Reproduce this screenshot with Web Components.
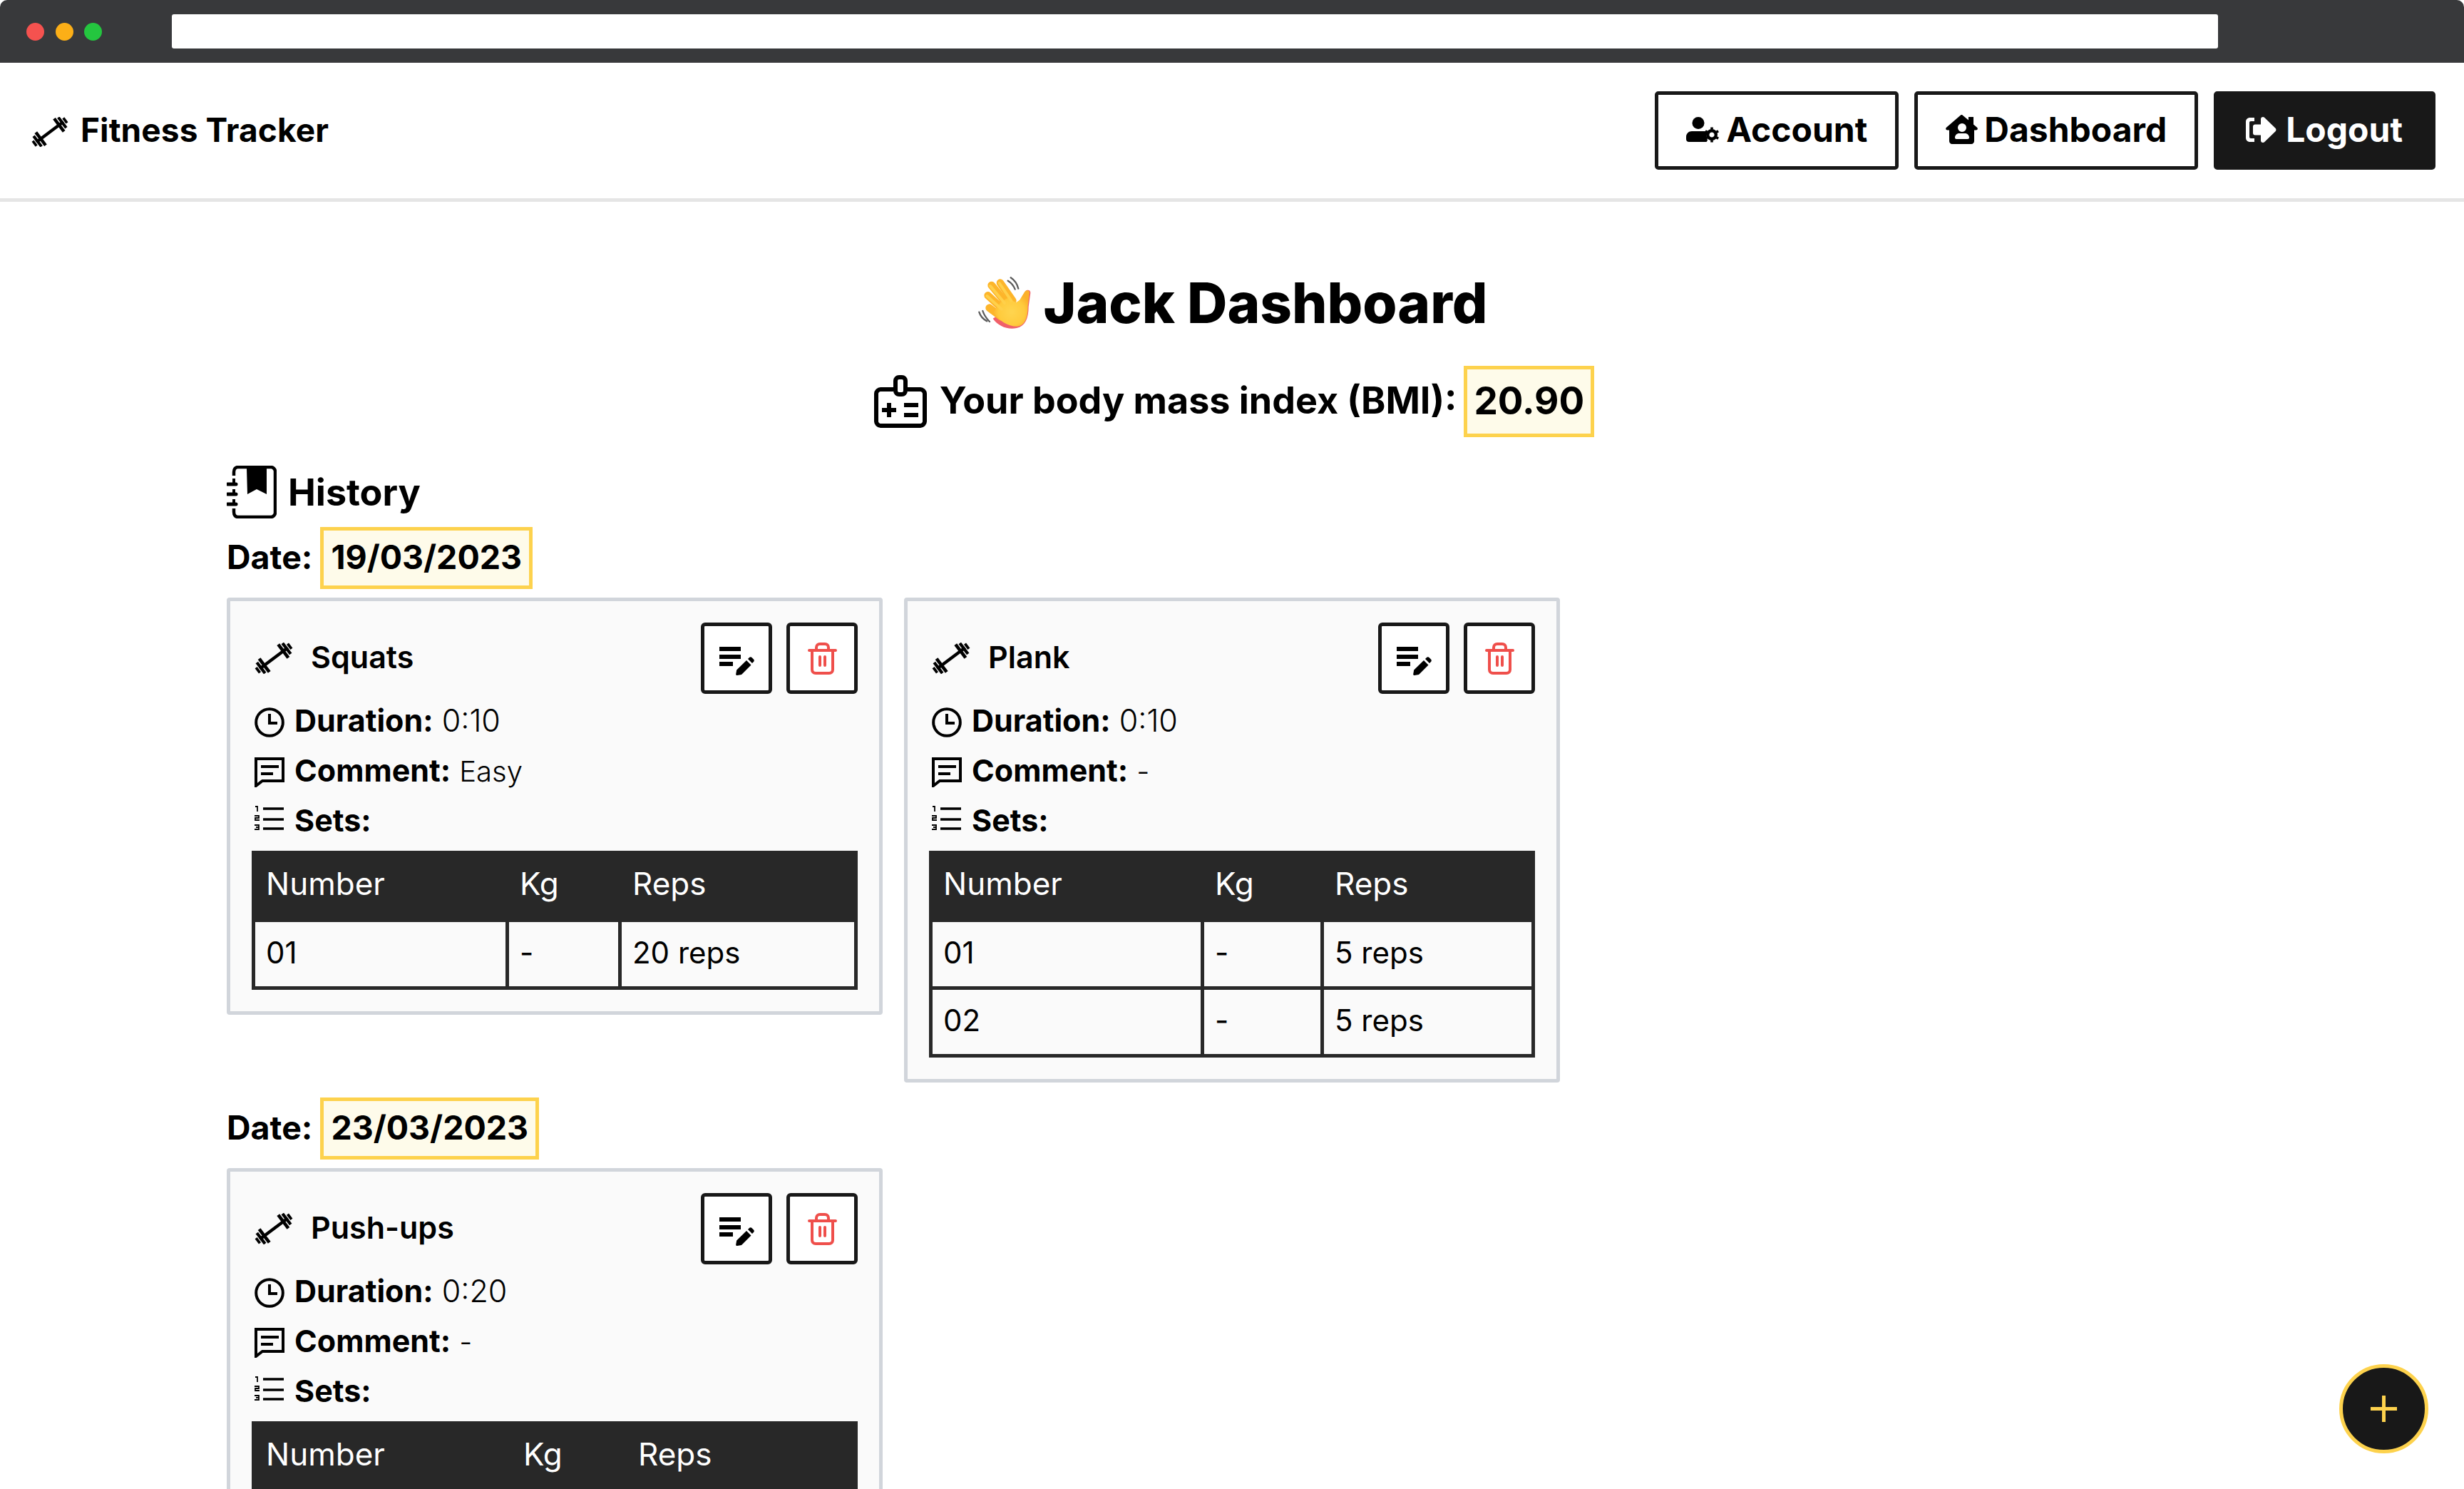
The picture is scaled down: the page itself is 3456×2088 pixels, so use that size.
<!DOCTYPE html>
<html lang="en">
<head>
<meta charset="utf-8">
<title>Fitness Tracker</title>
<style>
  html, body { margin: 0; height: 2088px; overflow: hidden; background: #fff; }
  body { font-family: Inter, "Liberation Sans", sans-serif; color: #000; }
</style>
</head>
<body>
<browser-bar></browser-bar>
<app-nav>
  <nav-button icon="account">Account</nav-button>
  <nav-button icon="house">Dashboard</nav-button>
  <nav-button icon="logout" dark>Logout</nav-button>
</app-nav>
<dash-page>
  <dash-heading name="Jack Dashboard" bmi="20.90"></dash-heading>
  <history-title>History</history-title>

  <date-group date="19/03/2023">
    <workout-card name="Squats" duration="0:10" comment="Easy"
      cols="351 153 326" rows="01|-|20 reps"></workout-card>
    <workout-card name="Plank" duration="0:10" comment="-"
      cols="376 163 291" rows="01|-|5 reps;02|-|5 reps"></workout-card>
  </date-group>

  <date-group date="23/03/2023">
    <workout-card name="Push-ups" duration="0:20" comment="-"
      cols="356 156 318"></workout-card>
  </date-group>
</dash-page>
<add-button></add-button>

<script>
// all the icons live here, each one is a full svg string
const ICONS = {
  barbell: `<svg viewBox="3 3 50 38" width="100%" height="100%"><g transform="translate(28 22) rotate(-37)" fill="#000">
    <rect x="-22" y="-2" width="44" height="4"/>
    <rect x="-17" y="-10.5" width="4.200" height="21"/><rect x="-22" y="-8.5" width="3.800" height="17"/><rect x="-26.5" y="-4" width="3.400" height="8"/>
    <rect x="12.800" y="-10.5" width="4.200" height="21"/><rect x="18.200" y="-8.5" width="3.800" height="17"/><rect x="23.100" y="-4" width="3.400" height="8"/>
  </g></svg>`,
  account: `<svg viewBox="0 0 47 36" width="47" height="36"><circle cx="17" cy="8.5" r="8.5"/>
    <path d="M8 20h18c1.500 0 3 .5 4 1.200-2 3.300-2 7.800 0 11-.6 2-1 2.800-3 2.800H4c-2.500 0-4-1.500-4-4v-3c0-4.500 3.500-8 8-8z"/>
    <g transform="translate(36 25)"><circle r="5.800" fill="none" stroke="#000" stroke-width="4.400"/>
    <g stroke="#000" stroke-width="3.600"><path d="M0-10.500v3M0 7.500v3M-9.100-5.200l2.600 1.500M6.500 3.700l2.600 1.500M-9.100 5.200l2.600-1.500M6.500-3.700l2.600-1.500"/></g></g></svg>`,
  house: `<svg viewBox="8 8 45 41" width="45" height="41"><path fill-rule="evenodd" d="M31 8 40 15.500V11h7v10.500l5 4.300c1.700 1.600.5 3.700-1.500 3.700H48V45c0 2.200-1.800 4-4 4H17c-2.200 0-4-1.800-4-4V29.500h-2.500c-2 0-3.200-2.100-1.500-3.700L29 8.500c.6-.6 1.400-.6 2 -.5zM31 20a6 6 0 1 0 0 12 6 6 0 0 0 0-12zM27 34c-3.500 0-6 2.700-6 6 0 1.200.8 2 2 2h16c1.200 0 2-.8 2-2 0-3.300-2.500-6-6-6z"/></svg>`,
  logout: `<svg viewBox="0 0 44 36" width="44" height="36" fill="#fff"><path d="M13 1H7C3.200 1 1 3.400 1 7v22c0 3.600 2.200 6 6 6h6v-5H8c-1.300 0-2-.8-2-2V8c0-1.300.7-2 2-2h5z"/>
    <path d="M25 0c.8 0 1.500.3 2 .8l15.500 15c1.300 1.300 1.300 3.200 0 4.500L27 35.200c-.5.500-1.200.8-2 .8-1.700 0-3-1.300-3-3v-7.500H14c-1.700 0-3-1.300-3-3v-9c0-1.700 1.300-3 3-3h8V3c0-1.700 1.300-3 3-3z"/></svg>`,
  wave: `<svg viewBox="0 0 270 270" width="90" height="90"><defs><radialGradient id="p" cx=".5" cy=".6" r=".55"><stop offset="0" stop-color="#ffd54f"/><stop offset=".65" stop-color="#ffcb3d"/><stop offset="1" stop-color="#fbb02a"/></radialGradient></defs>
    <g fill="none" stroke="#5c5c5c" stroke-width="7" stroke-linecap="round"><path d="M152 38c14 8 24 20 30 36"/><path d="M164 25c15 10 27 26 32 46"/><path d="M31 170c5 16 17 30 33 38"/><path d="M46 165c5 15 16 32 29 45"/></g>
    <path d="M90 195c22 32 62 48 100 40 36-8 50-40 50-90l8-58c1-12-14-16-22-6l-22 36-16 12z" fill="#f0606a" transform="translate(-1 2)"/>
    <g fill="none" stroke="#fdb52a" stroke-width="32" stroke-linecap="round"><path d="M120 47l52 75"/><path d="M83 57l62 75"/><path d="M68 100l66 60"/><path d="M74 152l50 38"/></g>
    <path d="M92 170c20 36 60 60 98 60 34-2 46-36 46-86l7-56c1-10-13-13-20-4l-22 36-15 10-36-20-30 20z" fill="url(#p)"/>
    <g fill="none" stroke="#ffd04a" stroke-width="12" stroke-linecap="round"><path d="M116 48l50 74"/><path d="M78 60l60 72"/><path d="M64 102l62 56"/></g></svg>`,
  idcard: `<svg viewBox="0 0 74 74" width="74" height="74"><path d="M27 20H9c-3 0-6 3-6 6v39c0 3 3 6 6 6h56c3 0 6-3 6-6V26c0-3-3-6-6-6H47" fill="none" stroke="#000" stroke-width="6"/>
    <rect x="30" y="3" width="14" height="24" rx="5" fill="none" stroke="#000" stroke-width="6"/>
    <path d="M21 39v20M11 49h20" stroke="#000" stroke-width="6" fill="none"/><path d="M42 42h20M42 56h20" stroke="#000" stroke-width="6"/></svg>`,
  book: `<svg viewBox="0 0 70 74" width="70" height="74"><path d="M10 14V9c0-4 2-7 6-7h46c3 0 6 3 6 6v58c0 3-3 6-6 6H16c-4 0-6-3-6-7v-5" fill="none" stroke="#000" stroke-width="4.500"/>
    <path d="M10 18v6M10 33v6M10 47v6" stroke="#000" stroke-width="4" fill="none"/>
    <path d="M1 26h12M1 40h12M1 54h12" stroke="#000" stroke-width="5" stroke-linecap="round"/>
    <path d="M28 4h28v36l-14-7-13 7z"/></svg>`,
  clock: `<svg viewBox="0 0 42 42" width="42" height="42" fill="none" stroke="#000" stroke-width="4"><circle cx="21" cy="21" r="18.800"/><path d="M21 9v13h11"/></svg>`,
  comment: `<svg viewBox="0 0 42 42" width="42" height="42" fill="none" stroke="#000" stroke-width="4"><path d="M2 2h38v31H11l-9 7z"/><path d="M9 13h25M9 23h17"/></svg>`,
  sets: `<svg viewBox="0 0 42 38" width="42" height="38" style="margin-top:-8px" fill="none" stroke="#000"><path d="M12 4h29M12 19h29M12 32h29" stroke-width="3.400"/>
    <path d="M1 1h3v7M0 14h6v3H1v3h6M0 27h6v3H2h4v3H0" stroke-width="1.800"/></svg>`,
  edit: `<svg viewBox="0 0 50 50" width="50" height="50"><path d="M1 9h30v6H1zM1 20h30v6H1zM1 30h19v6H1z"/>
    <path d="M26 49c-1 .2-2-.6-1.800-1.800l1-5.700L39 28l6.500 6.500L32 48zM41 26l2-2c1-1 2.500-1 3.500 0l2.500 2.500c1 1 1 2.500 0 3.500l-2 2z"/></svg>`,
  trash: `<svg viewBox="0 0 50 50" width="50" height="50" fill="none" stroke="#ef4f4b" stroke-width="4" stroke-linecap="round"><path d="M7 14h37M17 14V10c0-3 2-5 5-5h7c3 0 5 2 5 5v4M11 14v27c0 3 2 5 5 5h19c3 0 5-2 5-5V14"/><path d="M22 23v12M29 23v12"/></svg>`
};

class BrowserBar extends HTMLElement {
  constructor() {
    super();
    this.attachShadow({ mode: 'open' });
    this.shadowRoot.innerHTML = `
      <style>
        :host { display: flex; align-items: center; height: 88px; background: #38393b; border-radius: 10px 10px 0 0; padding-left: 37px; box-sizing: border-box; }
        .dots { display: flex; gap: 15.5px; }
        .dot { width: 25px; height: 25px; border-radius: 50%; }
        .url { height: 48px; width: 2870px; margin-left: 98px; background: #fff; border-radius: 3px; }
      </style>
      <div class="dots">
        <span class="dot" style="background:#f5524f"></span>
        <span class="dot" style="background:#fcaf17"></span>
        <span class="dot" style="background:#24c63f"></span>
      </div>
      <div class="url"></div>
    `;
  }
}
customElements.define('browser-bar', BrowserBar);

class AppNav extends HTMLElement {
  constructor() {
    super();
    this.attachShadow({ mode: 'open' });
    this.shadowRoot.innerHTML = `
      <style>
        :host { display: flex; align-items: center; justify-content: space-between; height: 195px; box-sizing: border-box; padding: 0 40px 0 43px; border-bottom: 5px solid #e5e5e5; }
        .brand { display: flex; align-items: center; gap: 16px; padding-bottom: 3px; font-size: 46px; font-weight: 700; letter-spacing: 0.1px; }
        .icon { width: 54px; height: 42px; }
        .links { display: flex; gap: 22px; }
      </style>
      <div class="brand"><span class="icon">${ICONS.barbell}</span>Fitness Tracker</div>
      <div class="links"><slot></slot></div>
    `;
  }
}
customElements.define('app-nav', AppNav);

class NavButton extends HTMLElement {
  constructor() {
    super();
    this.attachShadow({ mode: 'open' });
  }
  connectedCallback() {
    this.shadowRoot.innerHTML = `
      <style>
        :host { display: flex; align-items: center; gap: 9px; height: 110px; box-sizing: border-box; padding: 0 39px 3px; border: 5px solid #181818; border-radius: 5px; font-size: 48px; font-weight: 700; color: #000; background: #fff; }
        :host([dark]) { gap: 13px; padding-right: 41px; background: #181818; color: #fff; }
        svg { display: block; }
      </style>
      ${ICONS[this.getAttribute('icon')]}<slot></slot>
    `;
  }
}
customElements.define('nav-button', NavButton);

class DashPage extends HTMLElement {
  constructor() {
    super();
    this.attachShadow({ mode: 'open' });
    this.shadowRoot.innerHTML = `
      <style>
        :host { display: block; padding: 0 318px; }
      </style>
      <slot></slot>
    `;
  }
}
customElements.define('dash-page', DashPage);

class DashHeading extends HTMLElement {
  constructor() {
    super();
    this.attachShadow({ mode: 'open' });
  }
  connectedCallback() {
    this.shadowRoot.innerHTML = `
      <style>
        :host { display: block; padding-top: 98px; }
        h1 { display: flex; align-items: center; justify-content: center; gap: 10px; height: 90px; margin: 0 0 0 -6px; font-size: 78px; font-weight: 800; }
        h1 span { margin-top: -3px; }
        .bmi { display: flex; align-items: center; justify-content: center; margin: 42px 0 0 6px; height: 100px; font-size: 52px; font-weight: 700; }
        .bmi svg { margin-right: 18px; }
        .label { margin-top: -3px; }
        .val { display: flex; align-items: center; height: 100px; box-sizing: border-box; padding: 0 9px 3px; margin-left: 10px; background: #fefbea; border: 5px solid #fdd24d; font-size: 53px; }
      </style>
      <h1>${ICONS.wave}<span>${this.getAttribute('name')}</span></h1>
      <div class="bmi">${ICONS.idcard}<span class="label">Your body mass index (BMI):</span><span class="val">${this.getAttribute('bmi')}</span></div>
    `;
  }
}
customElements.define('dash-heading', DashHeading);

class HistoryTitle extends HTMLElement {
  constructor() {
    super();
    this.attachShadow({ mode: 'open' });
    this.shadowRoot.innerHTML = `
      <style>
        :host { display: flex; align-items: center; gap: 16px; height: 74px; margin-top: 40px; font-size: 52px; font-weight: 700; }
      </style>
      ${ICONS.book}<slot></slot>
    `;
  }
}
customElements.define('history-title', HistoryTitle);

class DateGroup extends HTMLElement {
  constructor() {
    super();
    this.attachShadow({ mode: 'open' });
  }
  connectedCallback() {
    this.shadowRoot.innerHTML = `
      <style>
        :host { display: block; padding-top: 12px; }
        :host(:not(:first-of-type)) { padding-top: 21px; }
        .date { display: flex; align-items: center; height: 87px; font-size: 46.5px; font-weight: 700; }
        .label { margin-top: -4px; }
        .val { display: flex; align-items: center; height: 87px; box-sizing: border-box; padding: 0 10px 4px; margin-left: 11px; background: #fefbea; border: 5px solid #fdd24d; }
        .cards { display: flex; align-items: flex-start; gap: 30px; margin-top: 12px; }
      </style>
      <div class="date"><span class="label">Date:</span><span class="val">${this.getAttribute('date')}</span></div>
      <div class="cards"><slot></slot></div>
    `;
  }
}
customElements.define('date-group', DateGroup);

class WorkoutCard extends HTMLElement {
  constructor() {
    super();
    this.attachShadow({ mode: 'open' });
  }
  connectedCallback() {
    const cols = this.getAttribute('cols').split(' ').map(c => c + 'px').join(' ');
    const rows = (this.getAttribute('rows') || '').split(';').filter(Boolean);
    const cell = t => `<div class="cell">${t}</div>`;
    this.shadowRoot.innerHTML = `
      <style>
        :host { display: block; width: 920px; box-sizing: border-box; padding: 30px; background: #fafafa; border: 5px solid #d1d5db; border-radius: 4px; font-size: 43px; }
        .head { display: flex; align-items: center; height: 100px; margin-bottom: 5px; font-weight: 600; }
        .head .bar { width: 56px; height: 44px; margin: 0 24px 0 3px; }
        .head .name { margin-top: -4px; }
        .btns { display: flex; gap: 20px; margin-left: auto; }
        .btn { display: flex; align-items: center; justify-content: center; width: 100px; height: 100px; box-sizing: border-box; background: #fff; border: 5px solid #181818; border-radius: 6px; }
        .meta { display: flex; align-items: center; height: 70px; padding-left: 4px; gap: 14px; font-weight: 300; }
        .meta > span { margin-top: -7px; }
        .meta b { font-weight: 700; }
        .comment { font-size: 40px; }
        svg { display: block; }
        .table { display: grid; grid-template-columns: ${cols}; grid-template-rows: 95px; grid-auto-rows: 90px; column-gap: 5px; row-gap: 5px; margin-top: 5px; padding: 0 5px 5px; background: #282828; }
        .cell { display: flex; align-items: center; padding: 0 0 6px 15px; background: #fafafa; color: #000; font-size: 42px; font-weight: 400; }
        .th { display: flex; align-items: center; padding: 0 0 4px 15px; background: #282828; color: #fff; font-size: 44px; font-weight: 400; }
      </style>
      <div class="head">
        <span class="bar">${ICONS.barbell}</span>
        <span class="name">${this.getAttribute('name')}</span>
        <div class="btns"><div class="btn">${ICONS.edit}</div><div class="btn">${ICONS.trash}</div></div>
      </div>
      <div class="meta">${ICONS.clock}<span><b>Duration:</b> ${this.getAttribute('duration')}</span></div>
      <div class="meta">${ICONS.comment}<span><b>Comment:</b> <span class="comment">${this.getAttribute('comment')}</span></span></div>
      <div class="meta">${ICONS.sets}<span><b>Sets:</b></span></div>
      <div class="table">
        <div class="th">Number</div><div class="th">Kg</div><div class="th">Reps</div>
        ${rows.map(r => r.split('|').map(cell).join('')).join('')}
      </div>
    `;
  }
}
customElements.define('workout-card', WorkoutCard);

class AddButton extends HTMLElement {
  constructor() {
    super();
    this.attachShadow({ mode: 'open' });
    this.shadowRoot.innerHTML = `
      <style>
        :host { position: fixed; left: 3281px; top: 1913px; display: flex; align-items: center; justify-content: center; width: 125px; height: 125px; box-sizing: border-box; border-radius: 50%; background: #181818; border: 5px solid #fdd24d; }
      </style>
      <svg viewBox="0 0 37 37" width="37" height="37"><path d="M16 0h5v16h16v5H21v16h-5V21H0v-5h16z" fill="#fdd24d"/></svg>
    `;
  }
}
customElements.define('add-button', AddButton);
</script>
</body>
</html>
